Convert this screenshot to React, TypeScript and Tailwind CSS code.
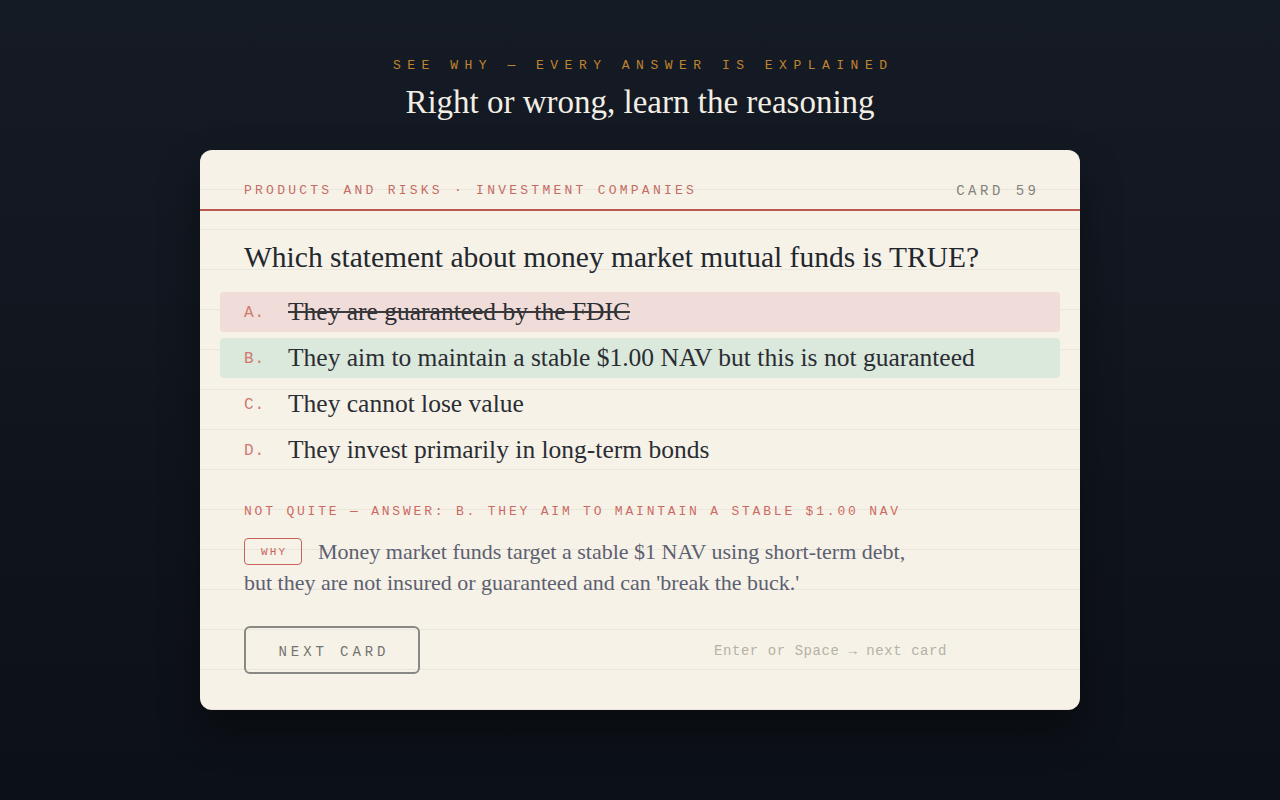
const serif = "font-['Georgia','Liberation_Serif','DejaVu_Serif',serif]";
const mono = "font-['Courier_New','Liberation_Mono',monospace]";

type Option = { key: string; text: string; state: "wrong" | "right" | "idle" };

const options: Option[] = [
  { key: "A.", text: "They are guaranteed by the FDIC", state: "wrong" },
  { key: "B.", text: "They aim to maintain a stable $1.00 NAV but this is not guaranteed", state: "right" },
  { key: "C.", text: "They cannot lose value", state: "idle" },
  { key: "D.", text: "They invest primarily in long-term bonds", state: "idle" },
];

function OptionRow({ opt }: { opt: Option }) {
  const bg =
    opt.state === "wrong" ? "bg-[#f0dcd8]" : opt.state === "right" ? "bg-[#dbe8dc]" : "bg-transparent";
  return (
    <div className={`flex items-center h-[40px] rounded-[4px] px-6 ${bg}`}>
      <span className={`${mono} w-[44px] text-[16px] text-[#d07a70] tracking-[0.05em] pt-[2px]`}>{opt.key}</span>
      <span
        className={`${serif} text-[25.5px] leading-[32px] text-[#2a2d33] ${opt.state === "wrong" ? "line-through decoration-[#3a3a3a]" : ""}`}
      >
        {opt.text}
      </span>
    </div>
  );
}

export default function App() {
  return (
    <div className="min-h-screen bg-gradient-to-b from-[#151b25] to-[#0c1017] flex flex-col items-center pt-[57px]">
      <div className={`${mono} text-[13px] leading-[18px] tracking-[0.5em] text-[#c0842f] pl-[0.5em]`}>
        SEE WHY — EVERY ANSWER IS EXPLAINED
      </div>
      <h1 className={`${serif} mt-[9px] text-[33px] leading-[36px] text-[#f2eee4]`}>
        Right or wrong, learn the reasoning
      </h1>

      <div className="mt-[30px] w-[880px] h-[560px] rounded-[12px] bg-[#f6f2e8] shadow-[0_20px_40px_rgba(0,0,0,0.35)] overflow-hidden bg-[repeating-linear-gradient(to_bottom,transparent_0px,transparent_39px,#ebe6db_39px,#ebe6db_40px)]">
        {/* header */}
        <div className="flex justify-between items-center px-[44px] pt-[31px] pb-[8px] border-b-2 border-[#b85a4e]">
          <span className={`${mono} text-[13px] leading-[20px] tracking-[0.25em] text-[#c46c64]`}>
            PRODUCTS AND RISKS · INVESTMENT COMPANIES
          </span>
          <span className={`${mono} text-[14px] leading-[20px] tracking-[0.25em] text-[#85827c] -mr-[0.25em]`}>
            CARD 59
          </span>
        </div>

        <h2 className={`${serif} px-[44px] mt-[29px] text-[29.5px] leading-[34px] text-[#23272e]`}>
          Which statement about money market mutual funds is TRUE?
        </h2>

        <div className="mx-[20px] mt-[18px] flex flex-col gap-[6px]">
          {options.map((o) => (
            <OptionRow key={o.key} opt={o} />
          ))}
        </div>

        <div className="px-[44px]">
          <div className={`${mono} mt-[33px] text-[13px] leading-[18px] tracking-[0.215em] text-[#cc6a62]`}>
            NOT QUITE — ANSWER: B. THEY AIM TO MAINTAIN A STABLE $1.00 NAV
          </div>
          <p className={`${serif} mt-[15px] text-[22px] leading-[31px] text-[#5c6070]`}>
            <span
              className={`${mono} inline-flex items-center justify-center align-middle relative -top-[2px] h-[27px] w-[58px] mr-4 rounded-[4px] border-[1.5px] border-[#c9625a] text-[11px] leading-none tracking-[0.2em] text-[#c9625a] pl-[0.2em] pt-[2px]`}
            >
              WHY
            </span>
            Money market funds target a stable $1 NAV using short-term debt,
            <br />
            but they are not insured or guaranteed and can 'break the buck.'
          </p>

          <div className="mt-[28px] flex items-center">
            <button
              className={`${mono} h-[48px] w-[176px] rounded-[6px] border-2 border-[#8a8884] text-[14px] tracking-[0.28em] text-[#75736e] pl-[0.28em] pt-[4px]`}
            >
              NEXT CARD
            </button>
            <span className={`${mono} ml-[294px] pt-[2px] text-[14px] tracking-[0.04em] text-[#b6b1a5]`}>
              Enter or Space → next card
            </span>
          </div>
        </div>
      </div>
    </div>
  );
}
